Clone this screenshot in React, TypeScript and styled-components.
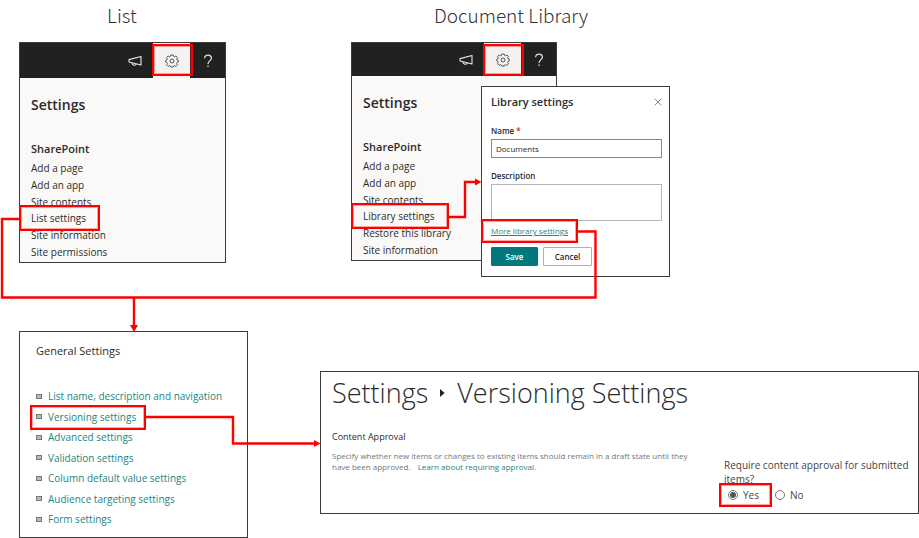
import React, { useState } from "react";
import styled, { createGlobalStyle, css } from "styled-components";

const RED = "#ff0000";
const TEAL = "#1d8583";

const GlobalStyle = createGlobalStyle`
  *, *::before, *::after { box-sizing: border-box; }
  body {
    margin: 0;
    background: #fff;
    color: #2b2b2b;
    font-family: "Open Sans", "Noto Sans", sans-serif;
    font-size: 10px;
  }
  h1, h2, h3, p, ul { margin: 0; padding: 0; font-weight: 400; }
  ul { list-style: none; }
  a { color: inherit; text-decoration: none; }
  button, input, textarea { font: inherit; color: inherit; margin: 0; }
`;

const Canvas = styled.main`
  position: relative;
  min-height: 100vh;
  overflow: hidden;
`;

/* A free-standing item on the diagram canvas. */
const Node = styled.section<{ $x: number; $y: number; $w?: number }>`
  position: absolute;
  left: ${(p) => p.$x}px;
  top: ${(p) => p.$y}px;
  ${(p) => p.$w && css`width: ${p.$w}px;`}
`;

const Panel = styled(Node)`
  border: 1px solid #3c3c3c;
  background: #fff;
`;

const SettingsPanel = styled(Panel)`
  background: #faf9f8;
`;

const Caption = styled.h1`
  font-family: "Noto Sans CJK JP", sans-serif;
  font-size: 19px;
  font-weight: 300;
  line-height: 24px;
  color: #333;
  white-space: nowrap;
`;

/* Red call-out frame laid over the part it surrounds. */
const Marked = styled.span<{ $t: number; $r: number; $b: number; $l: number }>`
  display: inline-block;
  vertical-align: top;
  position: relative;
  &::after {
    content: "";
    position: absolute;
    top: ${(p) => -p.$t}px;
    right: ${(p) => -p.$r}px;
    bottom: ${(p) => -p.$b}px;
    left: ${(p) => -p.$l}px;
    border: 2px solid ${RED};
    outline: 1px solid rgba(255, 0, 0, 0.35);
    outline-offset: -3px;
    pointer-events: none;
    z-index: 1;
  }
`;

const SuiteBar = styled.header<{ $h: number }>`
  display: flex;
  justify-content: flex-end;
  height: ${(p) => p.$h}px;
  background: #212121;
`;

const BarButton = styled.button<{ $active?: boolean; $last?: boolean }>`
  display: flex;
  align-items: center;
  justify-content: center;
  width: ${(p) => (p.$last ? 35 : 37)}px;
  height: 100%;
  padding: 0;
  border: 0;
  color: ${(p) => (p.$active ? "#555" : "#e6e6e6")};
  background: ${(p) => (p.$active ? "#f3f2f1" : "transparent")};
`;

const GearMark = styled(Marked)`
  display: block;
`;

const SettingsBody = styled.div`
  padding: 17px 11px 2px;
`;

const PaneTitle = styled.h2`
  font-size: 14px;
  font-weight: 600;
  line-height: 20px;
`;

const GroupTitle = styled.h3`
  margin-top: 25px;
  font-size: 11px;
  font-weight: 600;
  line-height: 18px;
`;

const LinkList = styled.ul`
  display: flex;
  flex-direction: column;
  justify-content: space-between;
  height: 100px;
  margin-top: 2px;
  line-height: 16px;
  white-space: nowrap;
`;

const Dialog = styled(Panel)`
  padding: 6px 7px 10px 9px;
  font-size: 8px;
  line-height: 12px;
`;

const DialogHead = styled.div`
  display: flex;
  align-items: center;
  justify-content: space-between;
`;

const DialogTitle = styled.h2`
  font-size: 11px;
  font-weight: 600;
  line-height: 18px;
`;

const CloseButton = styled.button`
  display: flex;
  padding: 0;
  border: 0;
  background: none;
  color: #666;
`;

const FieldLabel = styled.label<{ $gap: number }>`
  display: block;
  margin-top: ${(p) => p.$gap}px;
  margin-bottom: 2px;
  font-weight: 600;
`;

const Required = styled.span`
  color: #b4262c;
`;

const TextInput = styled.input`
  display: block;
  width: 100%;
  height: 19px;
  padding: 0 4px;
  border: 1px solid #8a8a8a;
  background: #fff;
`;

const TextArea = styled.textarea`
  display: block;
  width: 100%;
  height: 37px;
  border: 1px solid #b5b5b5;
  background: #fff;
  resize: none;
`;

const MoreRow = styled.p`
  margin-top: 4px;
`;

const MoreLink = styled.a`
  color: ${TEAL};
  text-decoration: underline;
`;

const Actions = styled.div`
  display: flex;
  gap: 5px;
  margin-top: 10px;
`;

const ActionButton = styled.button<{ $primary?: boolean }>`
  width: ${(p) => (p.$primary ? 47 : 49)}px;
  height: 19px;
  padding: 0;
  border: 1px solid ${(p) => (p.$primary ? "#03787c" : "#b0b0b0")};
  border-radius: 1px;
  background: ${(p) => (p.$primary ? "#03787c" : "#fff")};
  color: ${(p) => (p.$primary ? "#fff" : "#2b2b2b")};
  font-weight: 600;
`;

const GeneralPanel = styled(Panel)`
  padding: 10px 17px 8px 16px;
`;

const GeneralTitle = styled.h2`
  font-size: 11px;
  line-height: 18px;
`;

const GeneralList = styled.ul`
  display: flex;
  flex-direction: column;
  justify-content: space-between;
  height: 143px;
  margin-top: 26px;
  line-height: 20px;
  color: ${TEAL};
  white-space: nowrap;
`;

const BulletRow = styled.span`
  display: flex;
  align-items: center;
  gap: 6px;
  &::before {
    content: "";
    width: 6px;
    height: 5px;
    border: 1px solid #777;
    background: #bbb;
  }
`;

const VersionPanel = styled(Panel)`
  padding: 0 9px 9px 11px;
`;

const PageTitle = styled.h2`
  display: flex;
  align-items: center;
  gap: 12px;
  font-size: 27px;
  font-weight: 300;
  line-height: 42px;
  white-space: nowrap;
`;

const SectionTitle = styled.h3`
  margin-top: 14px;
  font-size: 9px;
  line-height: 18px;
`;

const Columns = styled.div`
  display: grid;
  grid-template-columns: 1fr 185px;
`;

const Description = styled.p`
  margin-top: 4px;
  font-size: 8px;
  line-height: 11px;
  color: #757575;
  white-space: nowrap;
`;

const LearnLink = styled.a`
  margin-left: 5px;
  color: ${TEAL};
`;

const Approval = styled.fieldset`
  min-width: 0;
  margin: 12px 0 0;
  padding: 0;
  border: 0;
  color: #444;
`;

const Legend = styled.legend`
  padding: 0;
  line-height: 14px;
  white-space: nowrap;
`;

const Radios = styled.div`
  display: flex;
  gap: 16px;
  padding: 1px 4px;
`;

const RadioLabel = styled.label`
  display: flex;
  align-items: center;
  gap: 5px;
  line-height: 16px;
`;

const Radio = styled.input`
  appearance: none;
  width: 10px;
  height: 10px;
  border: 1px solid #777;
  border-radius: 50%;
  background: #fff;
  &:checked {
    background: #555;
    background-clip: content-box;
    padding: 1px;
  }
`;

const Wires = styled.svg`
  position: absolute;
  left: 0;
  top: 0;
  z-index: 2;
  pointer-events: none;
`;

const Megaphone = () => (
  <svg width="14" height="12" viewBox="0 0 14 12" fill="none" stroke="currentColor" strokeWidth="1.1" strokeLinejoin="round">
    <path d="M13 1.5v8.5L1 7V4.6Z" />
    <path d="M4 7.9c0 2.4 3.6 3.3 4.3 1" />
  </svg>
);

const Gear = () => (
  <svg width="14" height="14" viewBox="0 0 14 14" fill="none" stroke="currentColor" strokeWidth="1" strokeLinejoin="round">
    <path d="M5.8 1h2.4l.4 1.4 1 .4L10.9 2l1.6 1.6-.8 1.3.4 1 1.1.2v2l-1.1.4-.4 1 .8 1.3-1.6 1.6-1.3-.8-1 .4L8.2 13H5.8l-.4-1-1-.4-1.3.8-1.6-1.6.8-1.3-.4-1L.8 8.1v-2l1.1-.2.4-1-.8-1.3L3.1 2l1.3.8 1-.4Z" />
    <circle cx="7" cy="7" r="2" />
  </svg>
);

const Help = () => (
  <svg width="10" height="14" viewBox="0 0 10 14" fill="none" stroke="currentColor" strokeWidth="1.2">
    <path d="M1.6 4.3C1.6 2.3 3 1.2 5 1.2s3.4 1.1 3.4 3c0 2.6-3.4 2.9-3.4 5.8" />
    <path d="M5 11.6v1.4" />
  </svg>
);

const Cross = () => (
  <svg width="8" height="8" viewBox="0 0 8 8" stroke="currentColor" strokeWidth="0.8">
    <path d="M.7.7l6.6 6.6M7.3.7L.7 7.3" />
  </svg>
);

const Caret = () => (
  <svg width="5" height="8" viewBox="0 0 5 8" fill="#222">
    <path d="M0 0l4.6 4L0 8Z" />
  </svg>
);

type PaneProps = { x: number; y: number; w: number; bar: number; items: string[]; active: string };

const SettingsPane = ({ x, y, w, bar, items, active }: PaneProps) => (
  <SettingsPanel $x={x} $y={y} $w={w}>
    <SuiteBar $h={bar}>
      <BarButton aria-label="Announcements"><Megaphone /></BarButton>
      <GearMark $t={-1} $r={3} $b={bar === 35 ? -2 : 0} $l={1}>
        <BarButton $active aria-label="Settings"><Gear /></BarButton>
      </GearMark>
      <BarButton $last aria-label="Help"><Help /></BarButton>
    </SuiteBar>
    <SettingsBody>
      <PaneTitle>Settings</PaneTitle>
      <GroupTitle>SharePoint</GroupTitle>
      <LinkList>
        {items.map((item) => (
          <li key={item}>
            {item === active ? (
              <Marked $t={5} $r={14} $b={5} $l={12}><a href="#settings">{item}</a></Marked>
            ) : (
              <a href="#settings">{item}</a>
            )}
          </li>
        ))}
      </LinkList>
    </SettingsBody>
  </SettingsPanel>
);

const listItems = ["Add a page", "Add an app", "Site contents", "List settings", "Site information", "Site permissions"];
const libraryItems = ["Add a page", "Add an app", "Site contents", "Library settings", "Restore this library", "Site information"];
const generalItems = [
  "List name, description and navigation",
  "Versioning settings",
  "Advanced settings",
  "Validation settings",
  "Column default value settings",
  "Audience targeting settings",
  "Form settings",
];

export default function App() {
  const [approval, setApproval] = useState("yes");
  return (
    <Canvas>
      <GlobalStyle />
      <Node $x={107} $y={3}><Caption>List</Caption></Node>
      <Node $x={434} $y={3}><Caption>Document Library</Caption></Node>

      <SettingsPane x={19} y={42} w={207} bar={35} items={listItems} active="List settings" />
      <SettingsPane x={351} y={42} w={206} bar={33} items={libraryItems} active="Library settings" />

      <Dialog $x={481} $y={86} $w={189}>
        <DialogHead>
          <DialogTitle>Library settings</DialogTitle>
          <CloseButton aria-label="Close"><Cross /></CloseButton>
        </DialogHead>
        <FieldLabel htmlFor="name" $gap={14}>Name <Required>*</Required></FieldLabel>
        <TextInput id="name" defaultValue="Documents" />
        <FieldLabel htmlFor="description" $gap={12}>Description</FieldLabel>
        <TextArea id="description" />
        <MoreRow>
          <Marked $t={6} $r={10} $b={6} $l={10}><MoreLink href="#more">More library settings</MoreLink></Marked>
        </MoreRow>
        <Actions>
          <ActionButton $primary>Save</ActionButton>
          <ActionButton>Cancel</ActionButton>
        </Actions>
      </Dialog>

      <GeneralPanel $x={19} $y={331} $w={229}>
        <GeneralTitle>General Settings</GeneralTitle>
        <GeneralList>
          {generalItems.map((item) => (
            <li key={item}>
              {item === "Versioning settings" ? (
                <Marked $t={2} $r={10} $b={3} $l={6}><BulletRow><a href="#item">{item}</a></BulletRow></Marked>
              ) : (
                <BulletRow><a href="#item">{item}</a></BulletRow>
              )}
            </li>
          ))}
        </GeneralList>
      </GeneralPanel>

      <VersionPanel $x={320} $y={371} $w={599}>
        <PageTitle>Settings <Caret /> Versioning Settings</PageTitle>
        <SectionTitle>Content Approval</SectionTitle>
        <Columns>
          <Description>
            Specify whether new items or changes to existing items should remain in a draft state until they
            <br />
            have been approved. <LearnLink href="#learn">Learn about requiring approval.</LearnLink>
          </Description>
          <Approval>
            <Legend>Require content approval for submitted<br />items?</Legend>
            <Radios>
              <Marked $t={4} $r={13} $b={4} $l={9}>
                <RadioLabel>
                  <Radio type="radio" name="approval" checked={approval === "yes"} onChange={() => setApproval("yes")} />
                  Yes
                </RadioLabel>
              </Marked>
              <RadioLabel>
                <Radio type="radio" name="approval" checked={approval === "no"} onChange={() => setApproval("no")} />
                No
              </RadioLabel>
            </Radios>
          </Approval>
        </Columns>
      </VersionPanel>

      <Wires width="919" height="538" viewBox="0 0 919 538" fill="none" stroke={RED} strokeWidth="2.4" aria-hidden="true">
        <path d="M20 219H2V297.500H595.500V231.500H577" />
        <path d="M134 297V326" />
        <path d="M447 217H465V182H476" />
        <path d="M145 417H233V443.500H316" />
        <g fill={RED} stroke="none">
          <path d="M130 325h8l-4 7Z" />
          <path d="M475 178.500v7l6.500-3.500Z" />
          <path d="M314 440v7l6.500-3.500Z" />
        </g>
      </Wires>
    </Canvas>
  );
}
